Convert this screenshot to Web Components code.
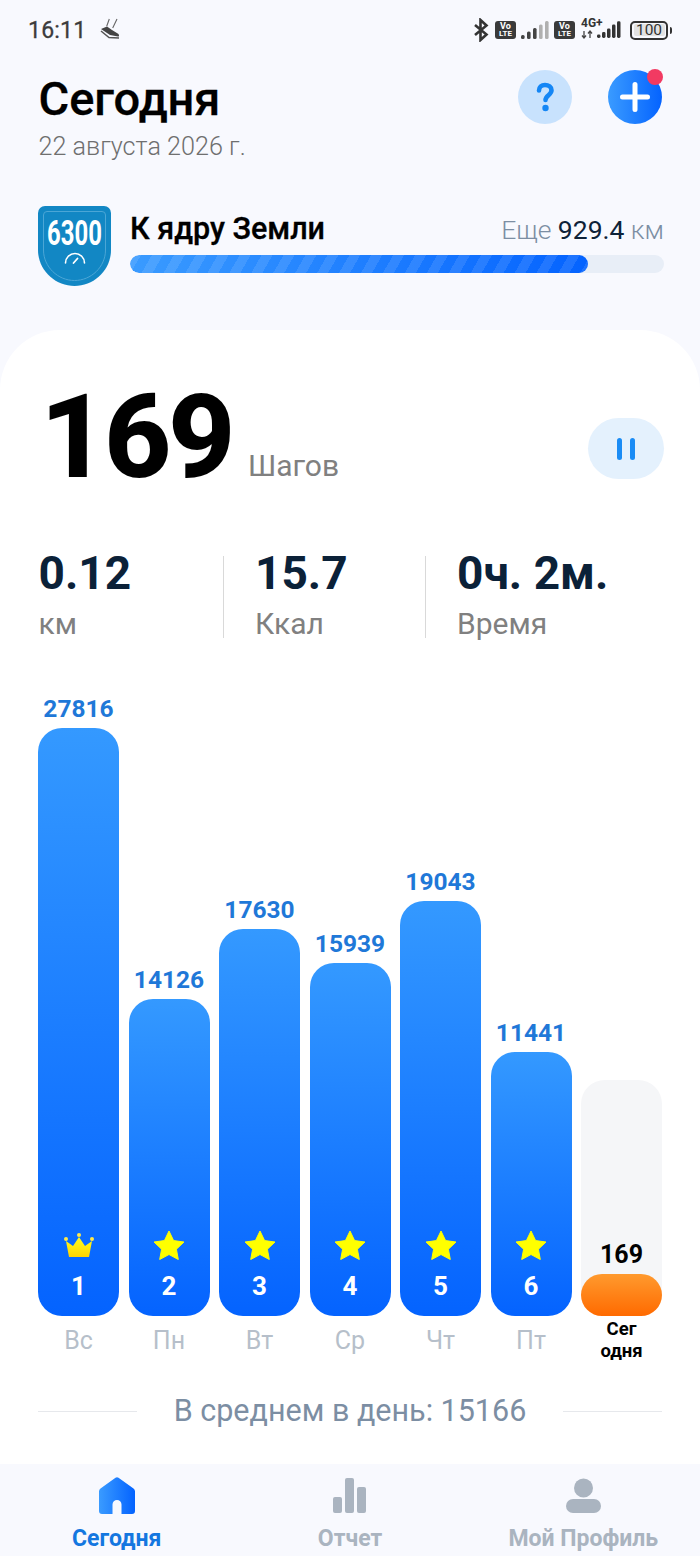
<!DOCTYPE html>
<html lang="ru">
<head>
<meta charset="UTF-8">
<meta name="viewport" content="width=device-width, initial-scale=1.0">
<title>Сегодня</title>
<style>
    html, body { margin: 0; padding: 0; background: #f8f9fe; }
    body { font-family: Roboto, "Noto Sans", sans-serif; }
</style>
</head>
<body>
<steps-app></steps-app>
<script>
    // Top system bar
    class StatusBar extends HTMLElement {
        constructor() {
            super();
            const shadow = this.attachShadow({ mode: 'open' });
            const volte = (gap) => `<span class="volte" style="margin-left:${gap}px"><b>Vo</b><b>LTE</b></span>`;
            shadow.innerHTML = `
                <style>
                    :host { display: flex; height: 60px; padding: 0 28px; box-sizing: border-box; align-items: center; justify-content: space-between; color: #3c3c3c; }
                    .left, .right { display: flex; align-items: center; }
                    .time { font-size: 23px; font-weight: 400; width: 72px; letter-spacing: .2px; -webkit-text-stroke: .3px #3c3c3c; }
                    .volte { display: flex; flex-direction: column; align-items: center; justify-content: center; width: 21px; height: 18px; border-radius: 3px; background: #3a3a3a; color: #fff; }
                    .volte b { font-size: 9px; line-height: 8px; font-weight: 700; }
                    .volte b + b { font-size: 8px; }
                    .net { position: relative; width: 40px; height: 20px; margin-left: 6px; }
                    .net i { position: absolute; left: 0; top: -2px; font: 700 12px/10px Roboto, sans-serif; color: #333; }
                    .net svg { position: absolute; left: 0; top: 0; }
                    .battery { display: flex; align-items: center; margin-left: 9px; }
                    .shell { width: 38px; height: 19px; box-sizing: border-box; border: 2px solid #333; border-radius: 5px; padding: 1.5px; }
                    .level { display: block; height: 100%; border-radius: 2px; background: #e2e2e2; font-size: 15.5px; line-height: 12px; text-align: center; color: #333; }
                    .nub { width: 2.5px; height: 7px; margin-left: 1.5px; background: #333; border-radius: 0 2px 2px 0; }
                </style>
                <div class="left">
                    <span class="time">16:11</span>
                    <svg width="20" height="22" viewBox="0 0 20 22" style="margin-top:-2px">
                        <path d="M9.3 1 6.7 8.3M17 1 12.7 10" stroke="#666" stroke-width="1.1" fill="none"/>
                        <path d="M1 11 7 8.5 12 12l6.5 4c1 2 .5 2.5-.5 2.5L10 17z" fill="#444"/>
                        <path d="M1 13 9 19.5l10 .5" stroke="#555" stroke-width="1.5" fill="none"/>
                    </svg>
                </div>
                <div class="right">
                    <svg width="16" height="24" viewBox="0 0 16 24">
                        <path d="M2 7 13.5 16.5 7.5 22V2l6 5.5L2 17" fill="none" stroke="#333" stroke-width="2.6"/>
                    </svg>
                    ${volte(6)}
                    <svg width="28" height="18" viewBox="0 0 28 18" style="margin-left:5px">
                        <rect x="0" y="14" width="3.6" height="4" rx="1.5" fill="#444"/>
                        <rect x="6" y="10.5" width="3.6" height="7.5" rx="1.5" fill="#444"/>
                        <rect x="12" y="7" width="3.6" height="11" rx="1.5" fill="#444"/>
                        <rect x="18" y="3.5" width="3.6" height="14.5" rx="1.5" fill="#b0b0b0"/>
                        <rect x="24" y="0" width="3.6" height="18" rx="1.5" fill="#b0b0b0"/>
                    </svg>
                    ${volte(5)}
                    <span class="net">
                        <i>4G+</i>
                        <svg width="40" height="20" viewBox="0 0 40 20">
                            <path d="M3 11v7M1 15.5 3 18l2-2.5M9 11v7M7 13.5 9 11l2 2.5" stroke="#444" stroke-width="1.3" fill="none"/>
                            <rect x="16" y="14.6" width="3.5" height="3.4" rx="1.4" fill="#333"/>
                            <rect x="21" y="12" width="3.5" height="6" rx="1.4" fill="#333"/>
                            <rect x="26" y="8.6" width="3.5" height="9.4" rx="1.4" fill="#333"/>
                            <rect x="31" y="4.6" width="3.5" height="13.4" rx="1.4" fill="#333"/>
                            <rect x="36" y="1.3" width="3.5" height="16.7" rx="1.4" fill="#333"/>
                        </svg>
                    </span>
                    <span class="battery"><span class="shell"><span class="level">100</span></span><span class="nub"></span></span>
                </div>
            `;
        }
    }

    // Title, date and the two round buttons
    class TodayHeader extends HTMLElement {
        constructor() {
            super();
            const shadow = this.attachShadow({ mode: 'open' });
            shadow.innerHTML = `
                <style>
                    :host { display: flex; justify-content: space-between; padding: 10px 38px 0 38.5px; height: 130px; box-sizing: border-box; }
                    h1 { margin: 0; padding-top: 1px; font-size: 47px; line-height: 56px; font-weight: 500; color: #000; -webkit-text-stroke: .3px #000; }
                    p { margin: 4px 0 0; font-size: 25.2px; line-height: 32px; font-weight: 300; color: #6f6f6f; }
                    .buttons { display: flex; gap: 36px; }
                    .round { position: relative; width: 54px; height: 54px; border-radius: 50%; display: flex; align-items: center; justify-content: center; }
                    .help { background: #c8e2fd; }
                    .add { background: linear-gradient(90deg, #3a9bff, #0463ff); }
                    .dot { position: absolute; top: -1px; right: -1px; width: 16px; height: 16px; border-radius: 50%; background: #f23a62; }
                </style>
                <div>
                    <h1>Сегодня</h1>
                    <p>22 августа 2026 г.</p>
                </div>
                <div class="buttons">
                    <div class="round help">
                        <svg width="20" height="30" viewBox="0 0 20 30">
                            <path d="M4 8.5C4 5 6.5 3 10 3s6.5 2 6.5 5.3c0 4.7-6 5-6 9.7" fill="none" stroke="#1486f5" stroke-width="4.6" stroke-linecap="round"/>
                            <circle cx="10.5" cy="26" r="3.2" fill="#1486f5"/>
                        </svg>
                    </div>
                    <div class="round add">
                        <svg width="30" height="30" viewBox="0 0 30 30">
                            <path d="M15 2.5v25M2.5 15h25" stroke="#fff" stroke-width="5" stroke-linecap="round"/>
                        </svg>
                        <span class="dot"></span>
                    </div>
                </div>
            `;
        }
    }

    // Badge and route progress
    class GoalProgress extends HTMLElement {
        constructor() {
            super();
            const shadow = this.attachShadow({ mode: 'open' });
            shadow.innerHTML = `
                <style>
                    :host { display: flex; gap: 19px; padding: 0 36px 0 38px; height: 80px; margin-top: 16px; }
                    svg { flex: none; }
                    .info { flex: 1; min-width: 0; }
                    .top { display: flex; justify-content: space-between; align-items: baseline; height: 49px; }
                    .name { font-size: 30.5px; line-height: 46px; font-weight: 500; color: #000; -webkit-text-stroke: .3px #000; }
                    .left { font-size: 26.5px; font-weight: 300; color: #7c8ea3; }
                    .left b { font-weight: 400; color: #0e2238; }
                    .track { height: 18px; border-radius: 9px; background: #e8eef7; overflow: hidden; }
                    .fill {
                        width: 458px; height: 100%; border-radius: 9px;
                        background:
                            repeating-linear-gradient(120deg, rgba(255,255,255,.1) 0 9.5px, rgba(255,255,255,0) 9.5px 19px),
                            linear-gradient(90deg, #3a9bff, #0463ff);
                    }
                </style>
                <svg width="73" height="80" viewBox="0 0 73 80">
                    <path d="M7 0H66a7 7 0 0 1 7 7V44C73 64 56 80 36.5 80S0 64 0 44V7a7 7 0 0 1 7-7z" fill="#1287c4"/>
                    <path d="M9 5.5H64a3.5 3.5 0 0 1 3.5 3.5V44C67.5 61 53 74.5 36.5 74.5S5.5 61 5.5 44V9A3.5 3.5 0 0 1 9 5.5z" fill="none" stroke="#4ba6d6" stroke-width="1"/>
                    <text transform="translate(9 39) scale(.664 1)" font-family="Roboto, sans-serif" font-size="36" font-weight="700" fill="#fff">6300</text>
                    <path d="M27.5 57a9.5 9.5 0 0 1 19 0" fill="none" stroke="#fff" stroke-width="1.6" stroke-linecap="round"/>
                    <path d="M35.5 57l4-4.5" stroke="#fff" stroke-width="1.8" stroke-linecap="round"/>
                </svg>
                <div class="info">
                    <div class="top">
                        <span class="name">К ядру Земли</span>
                        <span class="left">Еще <b>929.4</b> км</span>
                    </div>
                    <div class="track"><div class="fill"></div></div>
                </div>
            `;
        }
    }

    // Big step counter with the pause button
    class StepCounter extends HTMLElement {
        constructor() {
            super();
            const shadow = this.attachShadow({ mode: 'open' });
            shadow.innerHTML = `
                <style>
                    :host { display: flex; align-items: baseline; padding: 52px 36px 0 40px; height: 162px; box-sizing: border-box; }
                    .count { font-size: 117px; line-height: 110px; font-weight: 800; letter-spacing: -3.5px; color: #000; }
                    .unit { font-size: 30px; color: #808080; margin-left: 16px; position: relative; top: -1px; }
                    .pause {
                        margin-left: auto; align-self: flex-start; margin-top: 36px;
                        width: 76px; height: 61px; border-radius: 31px; background: #e4f1fd;
                        display: flex; align-items: center; justify-content: center; gap: 8.5px;
                    }
                    .pause i { width: 5px; height: 22px; border-radius: 3px; background: #1a8cf5; }
                </style>
                <span class="count">169</span>
                <span class="unit">Шагов</span>
                <div class="pause"><i></i><i></i></div>
            `;
        }
    }

    // One value with a caption under it
    class StatItem extends HTMLElement {
        constructor() {
            super();
            const shadow = this.attachShadow({ mode: 'open' });
            shadow.innerHTML = `
                <style>
                    :host { display: block; height: 82px; }
                    .value { font-size: 46px; line-height: 34px; font-weight: 700; color: #0b2138; white-space: nowrap; }
                    .label { margin-top: 17px; font-size: 30px; line-height: 34px; color: #808080; }
                </style>
                <div class="value"><slot name="value"></slot></div>
                <div class="label"><slot name="label"></slot></div>
            `;
        }
    }

    // Single column of the week chart
    class DayBar extends HTMLElement {
        constructor() {
            super();
            const shadow = this.attachShadow({ mode: 'open' });
            const h = this.getAttribute('h');
            const today = this.hasAttribute('today');
            const star = `<svg width="32" height="30" viewBox="0 0 32 30"><path d="M16 1l4.6 9.6 10.4 1.4-7.6 7.2 1.9 10.3L16 24.5 6.7 29.5l1.9-10.3L1 12l10.4-1.4z" fill="#ffff00" stroke="#ffff00" stroke-linejoin="round"/></svg>`;
            const crown = `<svg width="30" height="26" viewBox="0 0 30 26">
                <defs><linearGradient id="cr" x1="0" y1="0" x2="0" y2="1"><stop offset="0" stop-color="#ffff20"/><stop offset="1" stop-color="#ffd400"/></linearGradient></defs>
                <path d="M5 25 2 9l7 5 6-9 6 9 7-5-3 16z" fill="url(#cr)"/>
                <circle cx="15" cy="3" r="2" fill="#ffe94a"/><circle cx="2" cy="7" r="2" fill="#ffe94a"/><circle cx="28" cy="7" r="2" fill="#ffe94a"/>
            </svg>`;
            const body = today
                ? `<div class="bar track" style="height:${h}px"><span class="count">${this.getAttribute('value')}</span><div class="fill"></div></div>`
                : `<div class="value">${this.getAttribute('value')}</div>
                   <div class="bar" style="height:${h}px">
                       <span class="icon">${this.hasAttribute('crown') ? crown : star}</span>
                       <span class="num">${this.getAttribute('num')}</span>
                   </div>`;
            shadow.innerHTML = `
                <style>
                    :host { display: flex; flex-direction: column; align-items: stretch; justify-content: flex-end; }
                    .value { font-size: 24.5px; line-height: 30px; font-weight: 700; color: #1f78d8; text-align: center; margin: 0 -6px 4px; }
                    .bar {
                        box-sizing: border-box; border-radius: 24px; display: flex; flex-direction: column; align-items: center; justify-content: flex-end;
                        background: linear-gradient(180deg, #3499ff, #0463ff); color: #fff;
                    }
                    .icon { display: flex; height: 30px; align-items: center; margin-bottom: 1px; }
                    .num { font-size: 26px; line-height: 30px; font-weight: 700; margin: 10px 0 15px; }
                    .track { background: #f5f6f8; }
                    .count { font-size: 25px; line-height: 30px; font-weight: 700; color: #000; margin-bottom: 4px; }
                    .fill { width: 100%; height: 42px; border-radius: 21px; background: linear-gradient(180deg, #ff9a2e, #ff6a00); }
                    .day { height: 46px; padding-top: 2px; box-sizing: border-box; font-size: 25px; line-height: 46px; color: #b6bfca; text-align: center; }
                    .day.now { font-size: 18.5px; line-height: 22px; font-weight: 700; color: #000; }
                </style>
                ${body}
                <div class="day${today ? ' now' : ''}">${this.getAttribute('day')}</div>
            `;
        }
    }

    class WeekChart extends HTMLElement {
        constructor() {
            super();
            const shadow = this.attachShadow({ mode: 'open' });
            shadow.innerHTML = `
                <style>
                    :host { display: grid; grid-template-columns: repeat(7, 81px); justify-content: space-between; align-items: end; padding: 0 38px; margin-top: 56px; }
                </style>
                <slot></slot>
            `;
        }
    }

    class AverageLine extends HTMLElement {
        constructor() {
            super();
            const shadow = this.attachShadow({ mode: 'open' });
            shadow.innerHTML = `
                <style>
                    :host { display: flex; align-items: center; justify-content: space-between; padding: 0 38px; margin-top: 29px; height: 40px; }
                    i { width: 99px; height: 1px; background: #e6e8ec; }
                    span { font-size: 30.5px; line-height: 40px; color: #7c8ea3; }
                </style>
                <i></i><span><slot></slot></span><i></i>
            `;
        }
    }

    class TabItem extends HTMLElement {
        constructor() {
            super();
            const shadow = this.attachShadow({ mode: 'open' });
            shadow.innerHTML = `
                <style>
                    :host { display: flex; flex-direction: column; align-items: center; color: #aab4c0; }
                    :host([active]) { color: #1477e0; }
                    .icon { height: 38px; }
                    .text { margin-top: 10px; font-size: 23px; line-height: 28px; font-weight: 700; white-space: nowrap; }
                </style>
                <div class="icon"><slot name="icon"></slot></div>
                <div class="text"><slot></slot></div>
            `;
        }
    }

    class TabBar extends HTMLElement {
        constructor() {
            super();
            const shadow = this.attachShadow({ mode: 'open' });
            shadow.innerHTML = `
                <style>
                    :host { display: grid; grid-template-columns: repeat(3, 1fr); height: 92px; padding-top: 13px; box-sizing: border-box; background: #f8f9fe; }
                </style>
                <slot></slot>
            `;
        }
    }

    // Whole screen
    class StepsApp extends HTMLElement {
        constructor() {
            super();
            const shadow = this.attachShadow({ mode: 'open' });
            shadow.innerHTML = `
                <style>
                    :host { display: flex; flex-direction: column; width: 700px; height: 1556px; overflow: hidden; background: #f8f9fe; font-family: Roboto, "Noto Sans", sans-serif; }
                    .card { flex: 1; min-height: 0; margin-top: 44px; background: #fff; border-radius: 60px 60px 0 0; }
                    .stats { display: flex; padding-left: 38.5px; margin-top: 64px; }
                    .stats stat-item:nth-of-type(1) { width: 184.5px; }
                    .stats stat-item:nth-of-type(2) { width: 170px; }
                    .stats i { width: 1px; height: 82px; background: #d9d9d9; margin-right: 31px; }
                    .stats [slot] { display: block; }
                </style>
                <status-bar></status-bar>
                <today-header></today-header>
                <goal-progress></goal-progress>
                <div class="card">
                    <step-counter></step-counter>
                    <div class="stats">
                        <stat-item><span slot="value">0.12</span><span slot="label">км</span></stat-item>
                        <i></i>
                        <stat-item><span slot="value">15.7</span><span slot="label">Ккал</span></stat-item>
                        <i></i>
                        <stat-item><span slot="value">0ч. 2м.</span><span slot="label">Время</span></stat-item>
                    </div>
                    <week-chart>
                        <day-bar value="27816" h="588" num="1" day="Вс" crown></day-bar>
                        <day-bar value="14126" h="317" num="2" day="Пн"></day-bar>
                        <day-bar value="17630" h="387" num="3" day="Вт"></day-bar>
                        <day-bar value="15939" h="353" num="4" day="Ср"></day-bar>
                        <day-bar value="19043" h="415" num="5" day="Чт"></day-bar>
                        <day-bar value="11441" h="264" num="6" day="Пт"></day-bar>
                        <day-bar value="169" h="236" day="Сег<br>одня" today></day-bar>
                    </week-chart>
                    <average-line>В среднем в день: 15166</average-line>
                </div>
                <tab-bar>
                    <tab-item active>
                        <svg slot="icon" width="36" height="38" viewBox="0 0 36 38">
                            <defs><linearGradient id="hm" x1="0" y1="0" x2="1" y2="0"><stop offset="0" stop-color="#3a9bff"/><stop offset="1" stop-color="#0463ff"/></linearGradient></defs>
                            <path d="M16.5 .7a2.5 2.5 0 0 1 3 0L34.5 11.5a3.5 3.5 0 0 1 1.5 3V34a3 3 0 0 1-3 3H22.5V27.5a4.5 4.5 0 0 0-9 0V37H3a3 3 0 0 1-3-3V14.5a3.5 3.5 0 0 1 1.5-3z" fill="url(#hm)"/>
                        </svg>
                        Сегодня
                    </tab-item>
                    <tab-item>
                        <svg slot="icon" width="33" height="38" viewBox="0 0 33 38">
                            <rect x="0" y="20" width="9" height="16" rx="2" fill="#aab4c0"/>
                            <rect x="12" y="1" width="9" height="35" rx="2" fill="#aab4c0"/>
                            <rect x="24" y="10" width="9" height="26" rx="2" fill="#aab4c0"/>
                        </svg>
                        Отчет
                    </tab-item>
                    <tab-item>
                        <svg slot="icon" width="35" height="38" viewBox="0 0 35 38">
                            <circle cx="17.5" cy="11" r="9.5" fill="#aab4c0"/>
                            <rect x="0" y="22" width="35" height="14" rx="7" fill="#aab4c0"/>
                        </svg>
                        Мой Профиль
                    </tab-item>
                </tab-bar>
            `;
        }
    }

    // Children first, so the app's markup upgrades against defined elements
    customElements.define('status-bar', StatusBar);
    customElements.define('today-header', TodayHeader);
    customElements.define('goal-progress', GoalProgress);
    customElements.define('step-counter', StepCounter);
    customElements.define('stat-item', StatItem);
    customElements.define('day-bar', DayBar);
    customElements.define('week-chart', WeekChart);
    customElements.define('average-line', AverageLine);
    customElements.define('tab-item', TabItem);
    customElements.define('tab-bar', TabBar);
    customElements.define('steps-app', StepsApp);
</script>
</body>
</html>
